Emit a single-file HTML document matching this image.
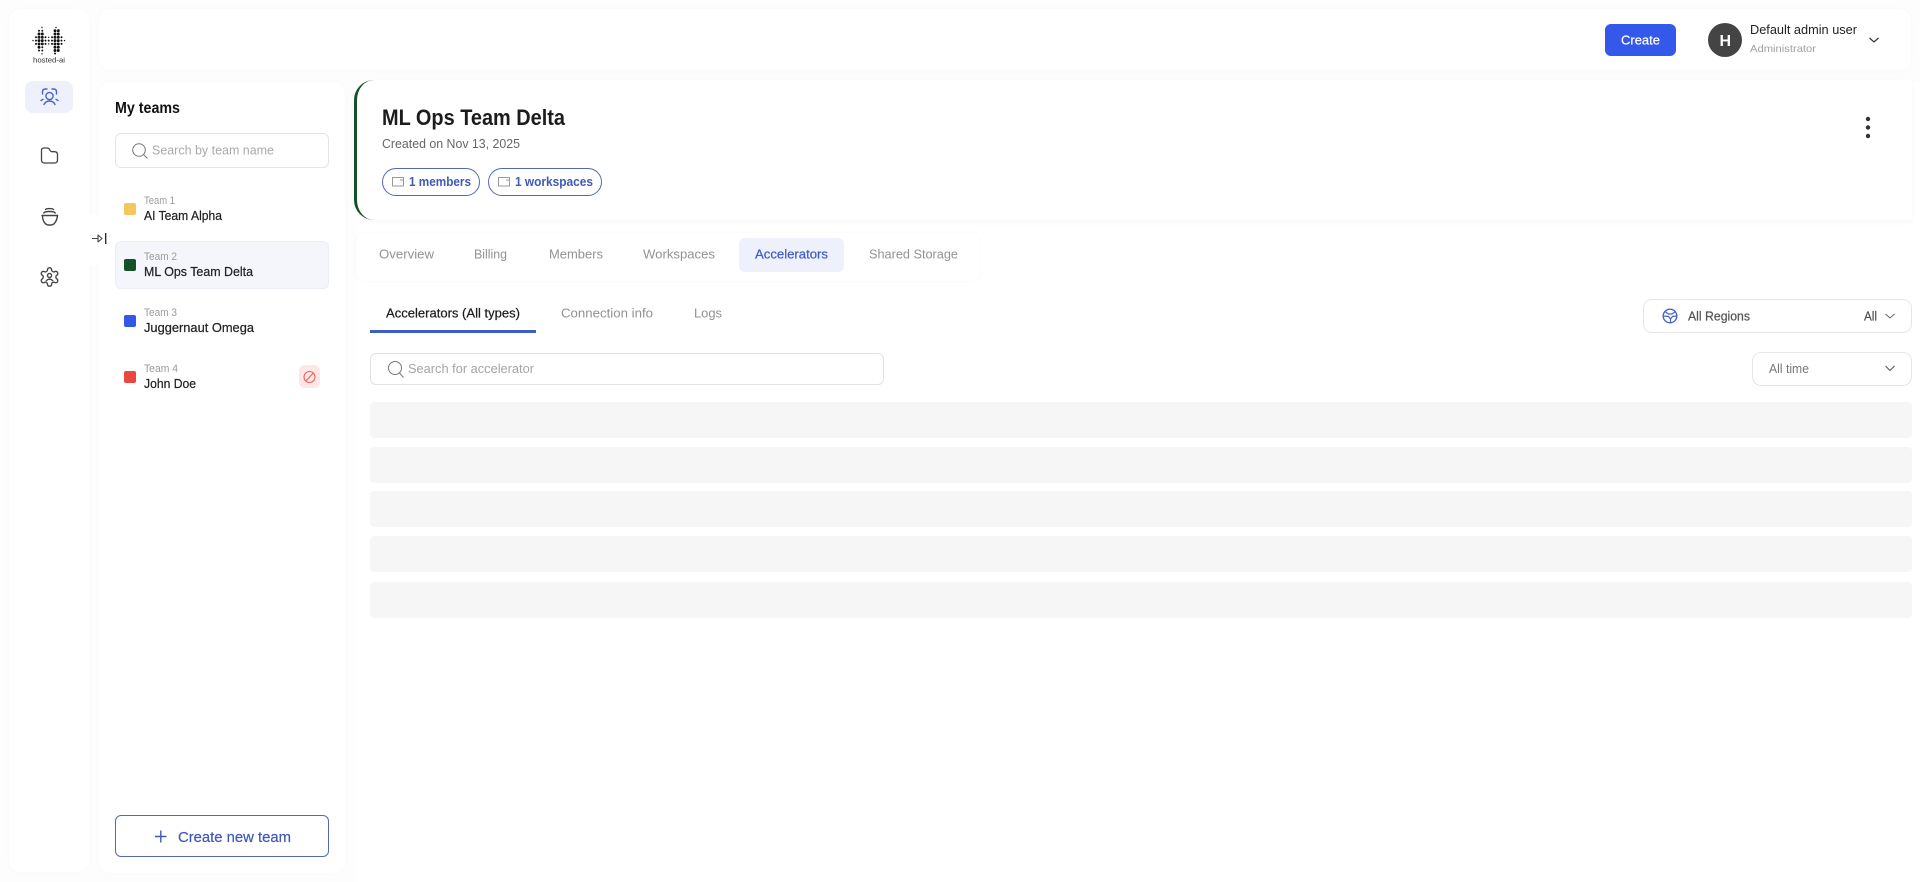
<!DOCTYPE html>
<html lang="en"><head><meta charset="utf-8"><title>Teams</title>
<style>
html,body{margin:0;padding:0;width:1920px;height:882px;overflow:hidden;background:#fff;font-family:"Liberation Sans",sans-serif}
.a{position:absolute;box-sizing:border-box}
.p{background:#fff;border-radius:12px;box-shadow:0 0 6px rgba(0,0,0,.025)}
.sk{left:370px;width:1542px;height:36px;background:#f6f6f6;border-radius:4px}
svg{position:absolute;left:0;top:0}
text{font-family:"Liberation Sans",sans-serif}
.m{stroke:currentColor;stroke-width:.22px}
</style></head><body>
<div class="a" style="left:0;top:0;width:1920px;height:882px;background:#fdfdfd"></div>
<div class="a p" style="left:9px;top:9px;width:80px;height:863px"></div>
<div class="a p" style="left:99px;top:9px;width:1812px;height:61px"></div>
<div class="a p" style="left:99px;top:82px;width:246px;height:791px"></div>
<div class="a" style="left:356px;top:82px;width:1564px;height:800px;background:#fff"></div>
<div class="a" style="left:354px;top:80px;width:1558px;height:140px;background:#fff;border-left:3px solid #14512a;border-radius:20px 0 0 20px;box-shadow:0 2px 6px rgba(0,0,0,.03)"></div>
<div class="a" style="left:356px;top:233px;width:624px;height:48px;background:#fff;border-radius:8px;box-shadow:0 0 3px rgba(0,0,0,.035)"></div>
<div class="a" style="left:89px;top:215px;width:22px;height:50px;background:#fff;border-radius:0 8px 8px 0"></div>
<div class="a" style="left:25px;top:81px;width:48px;height:32px;background:#eef1fb;border-radius:8px"></div>
<div class="a" style="left:115px;top:133px;width:214px;height:35px;background:#fff;border:1px solid #e4e4e4;border-radius:6px"></div>
<div class="a" style="left:115px;top:241px;width:214px;height:48px;background:#f4f6fb;border:1px solid #eceef4;border-radius:6px"></div>
<div class="a" style="left:124px;top:203px;width:12px;height:12px;background:#f6c65e;border-radius:2px"></div>
<div class="a" style="left:124px;top:259px;width:12px;height:12px;background:#14512a;border-radius:2px"></div>
<div class="a" style="left:124px;top:315px;width:12px;height:12px;background:#3357e6;border-radius:2px"></div>
<div class="a" style="left:124px;top:371px;width:12px;height:12px;background:#e8483f;border-radius:2px"></div>
<div class="a" style="left:299px;top:365px;width:21px;height:23px;background:#fde7e6;border-radius:6px"></div>
<div class="a" style="left:115px;top:815px;width:214px;height:42px;background:#fff;border:1px solid #5468b8;border-radius:6px"></div>
<div class="a" style="left:382px;top:168px;width:98px;height:28px;border:1px solid #5468b8;border-radius:14px"></div>
<div class="a" style="left:488px;top:168px;width:114px;height:28px;border:1px solid #5468b8;border-radius:14px"></div>
<div class="a" style="left:739px;top:238px;width:105px;height:34px;background:#eef1fb;border-radius:6px"></div>
<div class="a" style="left:370px;top:330px;width:166px;height:3px;background:#3f5bc6"></div>
<div class="a" style="left:370px;top:353px;width:514px;height:32px;background:#fff;border:1px solid #e2e2e2;border-radius:6px"></div>
<div class="a" style="left:1643px;top:299px;width:269px;height:34px;background:#fff;border:1px solid #e6e6e6;border-radius:9px"></div>
<div class="a" style="left:1752px;top:352px;width:160px;height:34px;background:#fff;border:1px solid #e6e6e6;border-radius:9px"></div>
<div class="a" style="left:1605px;top:24px;width:71px;height:32px;background:#3358ea;border-radius:6px"></div>
<div class="a" style="left:1708px;top:23px;width:34px;height:34px;background:#444;border-radius:50%"></div>
<div class="a sk" style="top:402px"></div>
<div class="a sk" style="top:447px"></div>
<div class="a sk" style="top:491px"></div>
<div class="a sk" style="top:536px"></div>
<div class="a sk" style="top:582px"></div>

<svg width="1920" height="882" viewBox="0 0 1920 882" fill="none">
<!-- logo -->
<path stroke="#111" stroke-width="2.900" stroke-linecap="round" d="M39 34h0M42.300 34h0M39 37.300h0M42.300 37.300h0M39 40.600h0M42.300 40.600h0M39 43.900h0M42.300 43.900h0M39 47.200h0M55 30.700h0M58.300 30.700h0M55 34h0M58.300 34h0M55 37.300h0M58.300 37.300h0M55 40.600h0M58.300 40.600h0M55 43.900h0M58.300 43.900h0M55 47.200h0M58.300 47.200h0M55 50.500h0M58.300 50.500h0"/>
<path stroke="#111" stroke-width="2" stroke-linecap="round" d="M36 37.300h0M36 40.600h0M36 43.900h0M45.500 37.300h0M45.500 40.600h0M45.500 43.900h0M52 37.300h0M52 40.600h0M52 43.900h0M61.500 37.300h0M61.500 40.600h0M61.500 43.900h0M39 30.700h0M42.300 30.700h0M39 50.500h0M42.300 50.500h0M42.300 47.200h0M48.700 40.600h0M55 53.500h0"/>
<path stroke="#111" stroke-width="1.400" stroke-linecap="round" d="M33 40.600h0M64.500 40.600h0M42 27.500h0M56 27.500h0M42 53.800h0M48.700 37.300h0M48.700 43.900h0"/>
<text x="33" y="62.500" font-size="7.500" fill="#333" textLength="32" lengthAdjust="spacingAndGlyphs">hosted-ai</text>
<!-- team icon -->
<g stroke="#4a63cc" stroke-width="1.400" stroke-linecap="round" stroke-linejoin="round">
<circle cx="49.500" cy="96" r="3.600"/>
<path d="M44 104.500c1.200-2.400 3-3.500 5.500-3.500s4.300 1.100 5.500 3.500"/>
<path d="M42.500 94v-2c0-1.800 1-3 2.800-3h1.700M56.500 94v-2c0-1.800-1-3-2.800-3H52"/>
<path d="M41 100.500l2-1.200M58 100.500l-2-1.200"/>
</g>
<!-- folder -->
<path stroke="#444" stroke-width="1.300" stroke-linejoin="round" d="M41.500 150.500c0-1.600 1-2.500 2.500-2.500h3.200c1 0 1.700.5 2.200 1.300l.9 1.500c.4.600 1 .9 1.700.9h2.500c2 0 3 1.200 3 3v5.300c0 2-1.200 3-3 3H44.500c-2 0-3-1.200-3-3z"/>
<!-- pot -->
<g stroke="#444" stroke-width="1.400" stroke-linecap="round" stroke-linejoin="round">
<path d="M45.500 209.500c1-1.300 7-1.300 8 0"/>
<path d="M43.800 213c1-2 10.400-2 11.400 0"/>
<path d="M42 215.500h15.500"/>
<path d="M42.500 215.500c0 5 2.500 9.500 6 9.500h2.500c3.500 0 6-4.500 6.500-9.500"/>
</g>
<!-- gear -->
<g transform="translate(38.500 266) scale(.92)" stroke="#444" stroke-width="1.500" stroke-linejoin="round">
<path d="M12.220 2h-.44a2 2 0 0 0-2 2v.18a2 2 0 0 1-1 1.730l-.43.25a2 2 0 0 1-2 0l-.15-.08a2 2 0 0 0-2.730.73l-.22.38a2 2 0 0 0 .73 2.730l.15.1a2 2 0 0 1 1 1.720v.51a2 2 0 0 1-1 1.740l-.15.09a2 2 0 0 0-.73 2.730l.22.38a2 2 0 0 0 2.730.73l.15-.08a2 2 0 0 1 2 0l.43.25a2 2 0 0 1 1 1.730V20a2 2 0 0 0 2 2h.44a2 2 0 0 0 2-2v-.18a2 2 0 0 1 1-1.730l.43-.25a2 2 0 0 1 2 0l.15.08a2 2 0 0 0 2.730-.73l.22-.39a2 2 0 0 0-.73-2.730l-.15-.08a2 2 0 0 1-1-1.740v-.5a2 2 0 0 1 1-1.740l.15-.09a2 2 0 0 0 .73-2.730l-.22-.38a2 2 0 0 0-2.730-.73l-.15.08a2 2 0 0 1-2 0l-.43-.25a2 2 0 0 1-1-1.730V4a2 2 0 0 0-2-2z"/>
<circle cx="12" cy="10.300" r="2.200"/><path d="M8.200 16.500c1-1.600 2.200-2.200 3.800-2.200s2.800.6 3.800 2.200"/>
</g>
<!-- collapse -->
<path stroke="#444" stroke-width="1.100" stroke-linejoin="round" d="M92 238.500h6M98 235v7l4-3.500z"/>
<path stroke="#222" stroke-width="1.300" d="M105.700 233v11"/>

<!-- teams panel -->
<text x="115" y="113" font-size="15.500" font-weight="700" fill="#111" textLength="65" lengthAdjust="spacingAndGlyphs">My teams</text>
<circle cx="139" cy="150" r="6.300" stroke="#777" stroke-width="1"/><path d="M143.500 154.500l4 4" stroke="#777" stroke-width="1"/>
<text x="152" y="154.500" font-size="13" fill="#aaa" textLength="122" lengthAdjust="spacingAndGlyphs">Search by team name</text>
<g font-size="11" fill="#9b9b9b">
<text x="144" y="204" textLength="31" lengthAdjust="spacingAndGlyphs">Team 1</text>
<text x="144" y="260" textLength="33" lengthAdjust="spacingAndGlyphs">Team 2</text>
<text x="144" y="316" textLength="33" lengthAdjust="spacingAndGlyphs">Team 3</text>
<text x="144" y="372" textLength="34" lengthAdjust="spacingAndGlyphs">Team 4</text>
</g>
<g font-size="13" fill="#222" color="#222" class="m">
<text x="144" y="220" textLength="78" lengthAdjust="spacingAndGlyphs">AI Team Alpha</text>
<text x="144" y="276" textLength="109" lengthAdjust="spacingAndGlyphs">ML Ops Team Delta</text>
<text x="144" y="332" textLength="110" lengthAdjust="spacingAndGlyphs">Juggernaut Omega</text>
<text x="144" y="388" textLength="52" lengthAdjust="spacingAndGlyphs">John Doe</text>
</g>
<circle cx="309.500" cy="377" r="5.500" stroke="#e8635c" stroke-width="1.100"/><path d="M305.800 381l7.500-8" stroke="#e8635c" stroke-width="1.100"/>
<path d="M155 836.500h11.500M160.800 830.500v12" stroke="#4059b5" stroke-width="1.400"/>
<text x="178" y="842" font-size="15" fill="#4059b5" color="#4059b5" class="m" textLength="113" lengthAdjust="spacingAndGlyphs">Create new team</text>

<!-- card -->
<text x="382" y="125" font-size="22" font-weight="700" fill="#1c1c1c" textLength="183" lengthAdjust="spacingAndGlyphs">ML Ops Team Delta</text>
<text x="382" y="148" font-size="13" fill="#666" textLength="138" lengthAdjust="spacingAndGlyphs">Created on Nov 13, 2025</text>
<path d="M392.500 177.500h11v8.500h-11zM400 180h3.500" stroke="#999" stroke-width="1"/>
<text x="409" y="186" font-size="12.500" font-weight="700" fill="#4059b5" textLength="62" lengthAdjust="spacingAndGlyphs">1 members</text>
<path d="M498.500 177.500h11v8.500h-11zM506 180h3.500" stroke="#999" stroke-width="1"/>
<text x="515" y="186" font-size="12.500" font-weight="700" fill="#4059b5" textLength="78" lengthAdjust="spacingAndGlyphs">1 workspaces</text>
<g fill="#333"><circle cx="1868" cy="119" r="2.200"/><circle cx="1868" cy="127.500" r="2.200"/><circle cx="1868" cy="136" r="2.200"/></g>

<!-- tabs -->
<g font-size="13" fill="#929292">
<text x="379" y="258.500" textLength="55" lengthAdjust="spacingAndGlyphs">Overview</text>
<text x="474" y="258.500" textLength="33" lengthAdjust="spacingAndGlyphs">Billing</text>
<text x="549" y="258.500" textLength="54" lengthAdjust="spacingAndGlyphs">Members</text>
<text x="643" y="258.500" textLength="72" lengthAdjust="spacingAndGlyphs">Workspaces</text>
<text x="755" y="258.500" fill="#3f5bc6" color="#3f5bc6" class="m" textLength="73" lengthAdjust="spacingAndGlyphs">Accelerators</text>
<text x="869" y="258.500" textLength="89" lengthAdjust="spacingAndGlyphs">Shared Storage</text>
<text x="386" y="317.500" fill="#1c1c1c" color="#1c1c1c" class="m" textLength="134" lengthAdjust="spacingAndGlyphs">Accelerators (All types)</text>
<text x="561" y="317.500" textLength="92" lengthAdjust="spacingAndGlyphs">Connection info</text>
<text x="694" y="317.500" textLength="28" lengthAdjust="spacingAndGlyphs">Logs</text>
</g>
<circle cx="395" cy="368" r="6.500" stroke="#777" stroke-width="1"/><path d="M399.500 373l4 4.500" stroke="#777" stroke-width="1"/>
<text x="408" y="373" font-size="13" fill="#a5a5a5" textLength="126" lengthAdjust="spacingAndGlyphs">Search for accelerator</text>

<!-- dropdowns -->
<circle cx="1670" cy="316" r="6.800" stroke="#4a63cc" stroke-width="1.400"/>
<path d="M1665 311.500l3.500 2.500h3.500l3.500-2.500M1670.500 322.500v-3.500l-2-2.500-5-.5M1670.500 319l2-2.500 4-.5" stroke="#4a63cc" stroke-width="1.200"/>
<text x="1688" y="320.500" font-size="13" fill="#555" color="#555" class="m" textLength="62" lengthAdjust="spacingAndGlyphs">All Regions</text>
<text x="1864" y="320.500" font-size="13" fill="#555" color="#555" class="m" textLength="13" lengthAdjust="spacingAndGlyphs">All</text>
<path d="M1885.500 314l4.500 4 4.500-4" stroke="#666" stroke-width="1"/>
<text x="1769" y="373" font-size="13" fill="#777" textLength="40" lengthAdjust="spacingAndGlyphs">All time</text>
<path d="M1885.500 366l4.500 4.500 4.500-4.500" stroke="#555" stroke-width="1.100"/>

<!-- header -->
<text x="1621" y="44.500" font-size="13" fill="#fff" color="#fff" class="m" textLength="39" lengthAdjust="spacingAndGlyphs">Create</text>
<text x="1719.500" y="46" font-size="16" font-weight="700" fill="#fff">H</text>
<text x="1750" y="34" font-size="13" fill="#222" textLength="107" lengthAdjust="spacingAndGlyphs">Default admin user</text>
<text x="1750" y="52" font-size="10.500" fill="#a0a0a0" textLength="66" lengthAdjust="spacingAndGlyphs">Administrator</text>
<path d="M1869.500 38l4.500 4 4.500-4" stroke="#333" stroke-width="1.200"/>
</svg>
</body></html>
